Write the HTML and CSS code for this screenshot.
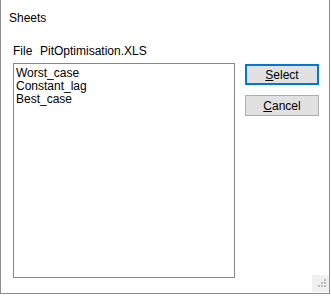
FILE: index.html
```html
<!DOCTYPE html>
<html lang="en">
<head>
  <meta charset="UTF-8">
  <title>Sheets</title>
  <link rel="stylesheet" href="styles.css">
</head>
<body>
  <div class="dialog">
    <div class="title">Sheets</div>

    <div class="file-row">
      <span class="file-label">File</span>
      <span class="file-name">PitOptimisation.XLS</span>
    </div>

    <div class="content">
      <ul class="listbox">
        <li>Worst_case</li>
        <li>Constant_lag</li>
        <li>Best_case</li>
      </ul>

      <div class="actions">
        <button class="btn btn-default"><u>S</u>elect</button>
        <button class="btn"><u>C</u>ancel</button>
      </div>
    </div>

    <div class="grip">
      <svg width="17" height="17" viewBox="0 0 17 17">
        <rect x="12" y="4" width="2" height="2" fill="#bcbcbc"/>
        <rect x="9" y="7" width="2" height="2" fill="#bcbcbc"/>
        <rect x="12" y="7" width="2" height="2" fill="#bcbcbc"/>
        <rect x="6" y="10" width="2" height="2" fill="#bcbcbc"/>
        <rect x="9" y="10" width="2" height="2" fill="#bcbcbc"/>
        <rect x="12" y="10" width="2" height="2" fill="#bcbcbc"/>
      </svg>
    </div>
  </div>
</body>
</html>
```

FILE: styles.css
```css
body {
  margin: 0;
  background-color: white;
  font-family: "Liberation Sans", Arial, sans-serif;
  font-size: 12px;
  color: black;
}

.dialog {
  position: relative;
  width: 328px;
  height: 293px;
  border-left: 1px solid #8c8c8c;
  border-right: 1px solid #8c8c8c;
  border-bottom: 1px solid #8c8c8c;
  background-color: white;
  display: flex;
  flex-direction: column;
}

.title {
  padding: 10px 0 0 8px;
  height: 16px;
  line-height: 16px;
}

.file-row {
  margin-top: 18px;
  padding-left: 12px;
  height: 15px;
  line-height: 15px;
  display: flex;
}

.file-label {
  width: 27px;
}

.content {
  display: flex;
  margin-top: 4px;
  padding-left: 12px;
}

.listbox {
  list-style: none;
  margin: 0;
  padding: 3px 2px 2px;
  width: 216px;
  height: 208px;
  border: 1px solid #828790;
}

.listbox li {
  height: 13px;
  line-height: 13px;
}

.actions {
  display: flex;
  flex-direction: column;
  gap: 10px;
  margin-left: 10px;
  margin-top: 1px;
}

.btn {
  width: 74px;
  height: 21px;
  padding: 0;
  background-color: #e1e1e1;
  border: 1px solid #adadad;
  font-family: inherit;
  font-size: 12px;
  color: black;
}

.btn-default {
  border: 2px solid #0078d7;
}

.grip {
  position: absolute;
  right: 0;
  bottom: 1px;
  width: 17px;
  height: 17px;
  background-color: #f0f0f0;
}
```
